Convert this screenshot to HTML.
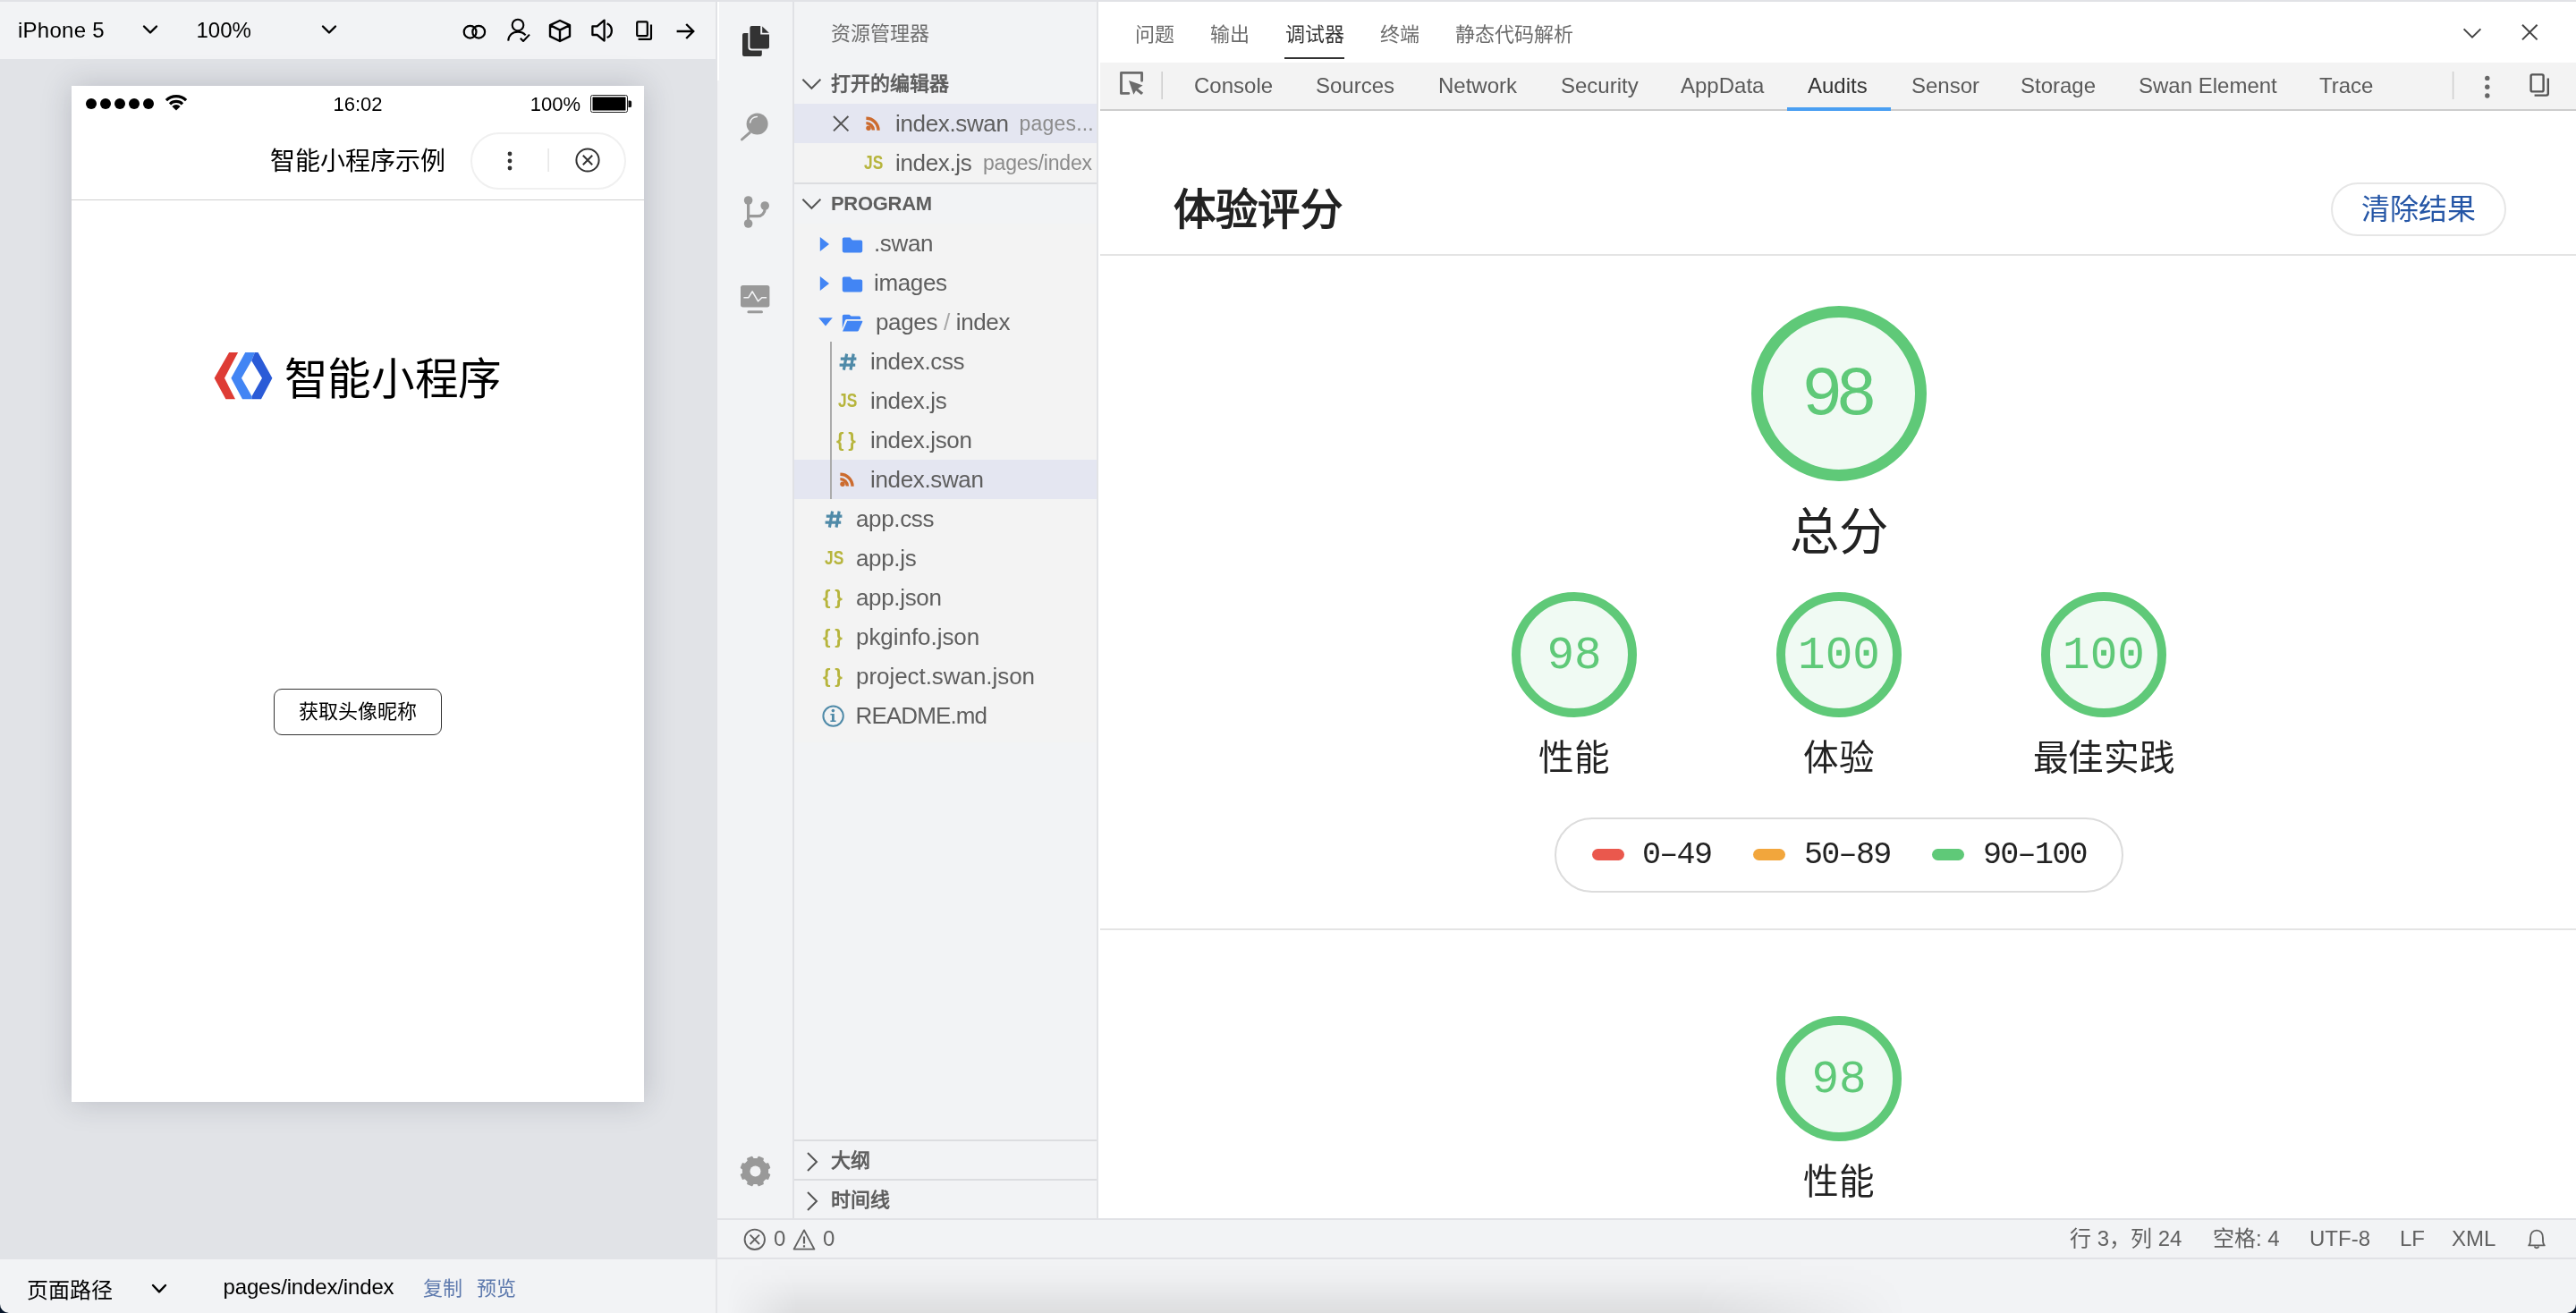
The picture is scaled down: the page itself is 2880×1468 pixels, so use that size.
<!DOCTYPE html>
<html lang="zh-CN">
<head>
<meta charset="utf-8">
<title>智能小程序开发者工具</title>
<style>
*{box-sizing:border-box;margin:0;padding:0}
html,body{width:2880px;height:1468px;overflow:hidden;background:#f2f3f5}
body{position:relative;font-family:"Liberation Sans",sans-serif;color:#000;-webkit-font-smoothing:antialiased;opacity:.999}
.abs{position:absolute}
.t{position:absolute;white-space:nowrap;line-height:1}
svg{position:absolute;overflow:visible}
/* ---------- left simulator panel ---------- */
#topline{left:0;top:0;width:2880px;height:2px;background:#e1e2e6}
#sim{left:0;top:2px;width:800px;height:1466px;background:#e1e3e7;overflow:hidden}
#simbar{left:0;top:0;width:800px;height:64px;background:#f2f3f5}
#simfoot{left:0;top:1406px;width:800px;height:60px;background:#f2f3f5}
#phone{left:80px;top:94px;width:640px;height:1136px;background:#fff;box-shadow:0 0 32px rgba(40,44,60,.21)}
#navline{left:0;top:127px;width:640px;height:1px;background:#cfcfcf}
#capsule{left:446px;top:52px;width:174px;height:64px;border:2px solid #f0f0f0;border-radius:32px}
#btn{left:226px;top:674px;width:188px;height:52px;border:1px solid #333;border-radius:9px}

/* ---------- activity bar + sidebar ---------- */
#act{left:802px;top:2px;width:84px;height:1360px;background:#f2f3f5}
#actb{left:886px;top:2px;width:2px;height:1360px;background:#e0e1e5}
#side{left:888px;top:2px;width:338px;height:1360px;background:#f2f3f5;overflow:hidden;color:#5e5e5e}
#sideb{left:1226px;top:2px;width:2px;height:1360px;background:#e2e3e6}
.row{position:absolute;left:0;width:338px;height:44px}
.sel{background:#e4e6f1}
.ft{position:absolute;white-space:nowrap;font-size:26px;height:44px;line-height:44px;top:0;letter-spacing:-0.35px}
.dim{color:#8b8b8b;font-size:23px;letter-spacing:-0.2px}
.hd{position:absolute;white-space:nowrap;font-size:22px;font-weight:bold;height:44px;line-height:44px;top:0;left:41px;color:#5e5e5e}
.ic{position:absolute;white-space:nowrap;font-weight:bold;top:0;height:44px;line-height:44px;text-align:center}
.js{color:#b7b53d;font-size:22px;margin-left:1px;transform:scaleX(.79);transform-origin:0 50%}
.br{color:#b7b53d;font-size:22px;letter-spacing:4.6px}
.hline{position:absolute;left:0;width:338px;height:2px;background:#dcdde0}

/* ---------- main panel ---------- */
#main{left:1228px;top:2px;width:1652px;height:1360px;background:#fff;overflow:hidden}
.pt{position:absolute;top:17px;height:40px;line-height:40px;font-size:22px;color:#6c6c6c;white-space:nowrap}
#dtbar{left:2px;top:68px;width:1650px;height:52px;background:#f3f3f3}
#dtline{left:2px;top:120px;width:1650px;height:2px;background:#cdcdcd}
.dt{position:absolute;top:68px;height:52px;line-height:52px;font-size:24px;color:#5a5a5a;white-space:nowrap}
.sep{position:absolute;height:2px;background:#e4e4e4;left:2px;width:1650px}
.ring{position:absolute;border-radius:50%;background:#f0faf3;border:10px solid #5fc978;color:#5fc978;font-family:"Liberation Mono",monospace;text-align:center;white-space:nowrap}
.r140{width:140px;height:140px;font-size:51px;line-height:124px}
.lab{position:absolute;width:300px;text-align:center;font-size:39.6px;height:56px;line-height:59px;color:#222;white-space:nowrap}
#legend{left:510px;top:912px;width:636px;height:84px;border:2px solid #dcdcdc;border-radius:42px}
.dash{position:absolute;top:947px;width:36px;height:13px;border-radius:7px}
.lg{position:absolute;top:932px;height:44px;line-height:44px;font-size:35px;font-family:"Liberation Mono",monospace;color:#222;white-space:nowrap;letter-spacing:-1.7px}
#clear{left:1378px;top:202px;width:196px;height:60px;border:2px solid #e6e6e6;border-radius:30px;color:#2556a6;font-size:32px;line-height:56px;text-align:center;white-space:nowrap}
/* ---------- status bar ---------- */
#status{left:802px;top:1362px;width:2078px;height:46px;background:#f2f3f5;border-top:2px solid #e1e2e6;border-bottom:2px solid #e1e2e6;color:#616161}
.st{position:absolute;top:0;height:42px;line-height:42px;font-size:24px;white-space:nowrap}
#under{left:802px;top:1408px;width:2078px;height:60px;background:#f2f3f5}
i{font-style:normal;display:inline-block;width:1em;text-align:center;letter-spacing:0}
</style>
</head>
<body>
<div class="abs" id="topline"></div>

<!-- ================= SIMULATOR ================= -->
<div class="abs" id="sim">
  <div class="abs" id="simbar"></div>
  <div class="t" style="left:20px;top:18px;font-size:24px;letter-spacing:.25px;height:28px;line-height:28px">iPhone 5</div>
  <div class="t" style="left:219.5px;top:18px;font-size:24px;height:28px;line-height:28px">100%</div>
  <svg style="left:0;top:0" width="800" height="64" viewBox="0 2 800 64" fill="none" stroke="#000" stroke-width="2.4" stroke-linecap="round" stroke-linejoin="round">
    <path d="M161 29.5 L168 36.5 L175 29.5"/>
    <path d="M361 29.5 L368 36.5 L375 29.5"/>
    <!-- link circles -->
    <circle cx="525.6" cy="35.7" r="6.9" stroke-width="2.2"/>
    <circle cx="535.2" cy="35.7" r="6.9" stroke-width="2.2"/>
    <!-- user check -->
    <circle cx="579" cy="28" r="6.3" stroke-width="2.1"/>
    <path d="M568.2 45.6 C568.6 39.6 573 35.6 579 35.6 C582.6 35.6 585.6 37 587.6 39.4" stroke-width="2.1" stroke-linecap="butt"/>
    <path d="M581.8 42.8 L585 46 L592 38.6" stroke-width="2.1" stroke-linecap="butt"/>
    <!-- cube -->
    <path d="M626 23 L637 28.2 V40.6 L626 46 L615 40.6 V28.2 Z M615 28.2 L626 33.6 L637 28.2 M626 33.6 V46" stroke-width="2.4"/>
    <!-- speaker -->
    <path d="M662.4 29.4 H667.6 L675.6 22.6 V45.6 L667.6 39 H662.4 Z" stroke-width="2.3"/>
    <path d="M678.6 26.4 A8.4 8.4 0 0 1 678.6 42" stroke-width="2.3" stroke-linecap="butt"/>
    <!-- copy -->
    <rect x="712.2" y="24.4" width="11.6" height="15.8" rx="1.2" stroke-width="2.2"/>
    <path d="M728 27.6 V42.4 a1.4 1.4 0 0 1 -1.4 1.4 H713.6" stroke-width="2.2" stroke-linecap="butt"/>
    <!-- arrow -->
    <path d="M756.6 35 H775 M767.2 27 L775.2 35 L767.2 43" stroke-width="2.4" stroke-linecap="butt" stroke-linejoin="miter"/>
  </svg>

  <!-- phone -->
  <div class="abs" id="phone">
    <svg style="left:0;top:0" width="640" height="130" viewBox="80 96 640 130">
      <g fill="#000">
        <circle cx="102" cy="116" r="6"/><circle cx="118" cy="116" r="6"/><circle cx="134" cy="116" r="6"/><circle cx="150" cy="116" r="6"/><circle cx="166" cy="116" r="6"/>
        <path d="M197 123.6 L192.4 119 A6.5 6.5 0 0 1 201.6 119 Z"/>
      </g>
      <g fill="none" stroke="#000" stroke-width="3.2">
        <path d="M185.9 112.2 A15.8 15.8 0 0 1 208.1 112.2"/>
        <path d="M190 116.3 A10 10 0 0 1 204 116.3"/>
      </g>
      <!-- battery -->
      <rect x="660.5" y="106.5" width="41" height="19" rx="2" fill="none" stroke="#222" stroke-width="1"/>
      <rect x="662.5" y="108.5" width="37" height="15" rx="0.5" fill="#000"/>
      <path d="M702.5 112.4 h2 a1.6 1.6 0 0 1 1.6 1.6 v4.4 a1.6 1.6 0 0 1 -1.6 1.6 h-2 Z" fill="#111"/>
      <!-- capsule icons -->
      <g fill="#333"><circle cx="570" cy="172" r="2.4"/><circle cx="570" cy="180" r="2.4"/><circle cx="570" cy="188" r="2.4"/></g>
      <rect x="612.4" y="166" width="1.4" height="26" fill="#e3e3e3"/>
      <circle cx="657" cy="179" r="12.6" fill="none" stroke="#333" stroke-width="2"/>
      <path d="M651.8 173.8 L662.2 184.2 M662.2 173.8 L651.8 184.2" stroke="#333" stroke-width="2" fill="none"/>
    </svg>
    <div class="t" style="left:220px;top:9px;width:200px;text-align:center;font-size:22px;height:24px;line-height:24px">16:02</div>
    <div class="t" style="left:449px;top:9px;width:120px;text-align:right;font-size:22px;height:24px;line-height:24px">100%</div>
    <div class="t" style="left:120px;top:65px;width:400px;text-align:center;font-size:28px;height:40px;line-height:40px"><i>智</i><i>能</i><i>小</i><i>程</i><i>序</i><i>示</i><i>例</i></div>
    <div class="abs" id="capsule"></div>
    <div class="abs" id="navline"></div>
    <!-- logo -->
    <svg style="left:0;top:290px" width="640" height="70" viewBox="80 386 640 70">
      <path d="M256.1 394 H266.1 L251 422.8 L263 446.2 H252.4 L239.6 422.8 Z" fill="#de3c35"/>
      <path d="M274.2 394 H285 L281.2 403.3 L270 422.8 L281.5 443 V446.2 H271 L258.4 422.8 Z" fill="#4285f4"/>
      <path d="M285 394 H288.5 L304.4 422.8 L292 446.2 H281.5 V443 L293 422.8 L281.2 403.3 Z" fill="#2b5bd7"/>
    </svg>
    <div class="t" style="left:237.8px;top:293px;font-size:48.6px;height:70px;line-height:70px"><i>智</i><i>能</i><i>小</i><i>程</i><i>序</i></div>
    <div class="abs" id="btn"></div>
    <div class="t" style="left:226px;top:674px;width:188px;text-align:center;font-size:22px;height:52px;line-height:52px"><i>获</i><i>取</i><i>头</i><i>像</i><i>昵</i><i>称</i></div>
  </div>

  <!-- footer -->
  <div class="abs" id="simfoot"></div>
  <div class="t" style="left:30px;top:1423px;font-size:24px;height:36px;line-height:36px"><i>页</i><i>面</i><i>路</i><i>径</i></div>
  <svg style="left:0;top:1406px" width="800" height="60" viewBox="0 1408 800 60" fill="none" stroke="#000" stroke-width="2.4" stroke-linecap="round" stroke-linejoin="round">
    <path d="M171 1437 L178 1444.4 L185 1437"/>
  </svg>
  <div class="t" style="left:249.5px;top:1419px;font-size:24px;height:36px;line-height:36px;letter-spacing:-.15px">pages/index/index</div>
  <div class="t" style="left:473px;top:1420.5px;font-size:22px;height:36px;line-height:36px;color:#5d79ad"><i>复</i><i>制</i></div>
  <div class="t" style="left:532.5px;top:1420.5px;font-size:22px;height:36px;line-height:36px;color:#5d79ad"><i>预</i><i>览</i></div>
</div>

<!-- divider between panels -->
<div class="abs" style="left:800px;top:2px;width:2px;height:1466px;background:#e1e2e6"></div>
<div class="abs" style="left:802px;top:2px;width:2px;height:88px;background:#fff"></div>


<!-- ================= ACTIVITY BAR ================= -->
<div class="abs" id="act"></div>
<div class="abs" style="left:802px;top:2px;width:2px;height:88px;background:#fff"></div>
<div class="abs" id="actb"></div>
<svg style="left:802px;top:2px" width="84" height="1360" viewBox="802 2 84 1360">
  <!-- files -->
  <g fill="#333">
    <path d="M840.4 29 H850.2 V38.6 H860 V52.6 a2 2 0 0 1 -2 2 H840.4 a2 2 0 0 1 -2 -2 V31 a2 2 0 0 1 2 -2 Z"/>
    <path d="M852.2 29.4 L859.8 36.8 H852.2 Z"/>
    <path d="M830 39 a2 2 0 0 1 2 -2 H836.4 V52.8 a3.8 3.8 0 0 0 3.8 3.8 H851.8 V61 a2 2 0 0 1 -2 2 H832 a2 2 0 0 1 -2 -2 Z"/>
  </g>
  <!-- search -->
  <g fill="#999" stroke="none">
    <circle cx="846.6" cy="138.6" r="12"/>
    <path d="M838 146.6 L840 148.8 L830.4 157 a1.4 1.4 0 0 1 -2 -2 Z"/>
  </g>
  <path d="M838.6 137 A8.4 8.4 0 0 1 846.4 130.6" fill="none" stroke="#f2f3f5" stroke-width="1.5" stroke-linecap="round"/>
  <!-- source control -->
  <g fill="#999"><circle cx="836.6" cy="224" r="4.8"/><circle cx="836.6" cy="250" r="4.8"/><circle cx="855.2" cy="230" r="4.8"/></g>
  <path d="M836.6 224 V250 M836.6 241.6 H847.2 a8 8 0 0 0 8 -8 V230" fill="none" stroke="#999" stroke-width="3.2"/>
  <!-- monitor -->
  <rect x="828" y="319" width="32.4" height="24.4" rx="2.6" fill="#999"/>
  <rect x="835.4" y="347.2" width="17.6" height="3" rx="1.5" fill="#999"/>
  <path d="M831.4 332.7 H836.9 L841.1 325.9 L847.6 336.8 L851.8 332.7 H857.1" fill="none" stroke="#f2f3f5" stroke-width="1.6" stroke-linejoin="round"/>
  <!-- gear -->
  <g transform="translate(844.5 1309.5)"><path d="M13.78 2.46 L15.95 3.83 L13.98 8.57 L11.48 8.01 L8.01 11.48 L8.57 13.98 L3.83 15.95 L2.46 13.78 L-2.46 13.78 L-3.83 15.95 L-8.57 13.98 L-8.01 11.48 L-11.48 8.01 L-13.98 8.57 L-15.95 3.83 L-13.78 2.46 L-13.78 -2.46 L-15.95 -3.83 L-13.98 -8.57 L-11.48 -8.01 L-8.01 -11.48 L-8.57 -13.98 L-3.83 -15.95 L-2.46 -13.78 L2.46 -13.78 L3.83 -15.95 L8.57 -13.98 L8.01 -11.48 L11.48 -8.01 L13.98 -8.57 L15.95 -3.83 L13.78 -2.46 Z" fill="#999" stroke="#999" stroke-width="1.6" stroke-linejoin="round"/><circle r="6" fill="#f2f3f5"/></g>
</svg>

<!-- ================= SIDEBAR ================= -->
<div class="abs" id="side">
  <div class="t" style="left:41px;top:20px;font-size:22px;height:32px;line-height:32px;color:#6f6f6f"><i>资</i><i>源</i><i>管</i><i>理</i><i>器</i></div>
  <div class="abs" style="left:0;top:114px;width:338px;height:88px;background:#f3f3f3"></div>
  <div class="abs" style="left:0;top:248px;width:338px;height:580px;background:#f3f3f3"></div>
  <div class="row" style="top:70px"><span class="hd"><i>打</i><i>开</i><i>的</i><i>编</i><i>辑</i><i>器</i></span></div>
  <div class="row sel" style="top:114px"><span class="ft" style="left:113px">index.swan</span><span class="ft dim" style="left:251.5px;letter-spacing:.2px">pages...</span></div>
  <div class="row" style="top:158px"><span class="ic js" style="left:77px">JS</span><span class="ft" style="left:113px">index.js</span><span class="ft dim" style="left:211px">pages/index</span></div>
  <div class="hline" style="top:202px"></div>
  <div class="row" style="top:204px"><span class="hd" style="letter-spacing:-.3px">PROGRAM</span></div>
  <div class="row" style="top:248px"><span class="ft" style="left:89px">.swan</span></div>
  <div class="row" style="top:292px"><span class="ft" style="left:89px">images</span></div>
  <div class="row" style="top:336px"><span class="ft" style="left:91px">pages <span style="color:#a8a8a8">/</span> index</span></div>
  <div class="row" style="top:380px"><span class="ft" style="left:85px">index.css</span></div>
  <div class="row" style="top:424px"><span class="ic js" style="left:48px">JS</span><span class="ft" style="left:85px">index.js</span></div>
  <div class="row" style="top:468px"><span class="ic br" style="left:47px">{}</span><span class="ft" style="left:85px">index.json</span></div>
  <div class="row sel" style="top:512px"><span class="ft" style="left:85px">index.swan</span></div>
  <div class="row" style="top:556px"><span class="ft" style="left:69px">app.css</span></div>
  <div class="row" style="top:600px"><span class="ic js" style="left:33px">JS</span><span class="ft" style="left:69px">app.js</span></div>
  <div class="row" style="top:644px"><span class="ic br" style="left:32px">{}</span><span class="ft" style="left:69px">app.json</span></div>
  <div class="row" style="top:688px"><span class="ic br" style="left:32px">{}</span><span class="ft" style="left:69px;letter-spacing:-.05px">pkginfo.json</span></div>
  <div class="row" style="top:732px"><span class="ic br" style="left:32px">{}</span><span class="ft" style="left:69px;letter-spacing:-.05px">project.swan.json</span></div>
  <div class="row" style="top:776px"><span class="ft" style="left:68.5px;letter-spacing:-.88px">README.md</span></div>
  <div class="abs" style="left:40px;top:380px;width:2px;height:176px;background:#ababab"></div>
  <div class="hline" style="top:1272px"></div>
  <div class="row" style="top:1274px"><span class="hd"><i>大</i><i>纲</i></span></div>
  <div class="hline" style="top:1316px"></div>
  <div class="row" style="top:1318px"><span class="hd"><i>时</i><i>间</i><i>线</i></span></div>
  <svg style="left:0;top:0" width="338" height="1360" viewBox="888 2 338 1360" fill="none">
    <g stroke="#555" stroke-width="2" stroke-linecap="butt">
      <path d="M897.4 88.8 L907.4 98.8 L917.4 88.8"/>
      <path d="M897.4 222.8 L907.4 232.8 L917.4 222.8"/>
      <path d="M903 1289 L913 1299 L903 1309"/>
      <path d="M903 1333 L913 1343 L903 1353"/>
      <path d="M932 130 L948.4 146.4 M948.4 130 L932 146.4"/>
    </g>
    <!-- rss icons -->
    <g fill="none" stroke="#cc6b2e" stroke-width="3.4">
      <circle cx="971" cy="143.2" r="2.7" fill="#cc6b2e" stroke="none"/>
      <path d="M968.4 137.6 A8 8 0 0 1 976.4 145.6"/>
      <path d="M968.4 132.2 A13.6 13.6 0 0 1 982 145.8"/>
    </g>
    <g fill="none" stroke="#cc6b2e" stroke-width="3.4" transform="translate(-29 398)">
      <circle cx="971" cy="143.2" r="2.7" fill="#cc6b2e" stroke="none"/>
      <path d="M968.4 137.6 A8 8 0 0 1 976.4 145.6"/>
      <path d="M968.4 132.2 A13.6 13.6 0 0 1 982 145.8"/>
    </g>
    <!-- css hash icons -->
    <g stroke="#4f8aa8" stroke-width="3.2">
      <path d="M946.6 395.6 L943.4 413.6 M954.2 395.6 L951 413.6 M939.8 401.2 H957.4 M938.6 408.2 H956.2"/>
    </g>
    <g stroke="#4f8aa8" stroke-width="3.2" transform="translate(-16 176)"><path d="M946.6 395.6 L943.4 413.6 M954.2 395.6 L951 413.6 M939.8 401.2 H957.4 M938.6 408.2 H956.2"/></g>
    <!-- folder arrows -->
    <g fill="#4285f4">
      <path d="M916.8 265 L927 273 L916.8 281 Z"/>
      <path d="M916.8 309 L927 317 L916.8 325 Z"/>
      <path d="M915.2 355.2 H930.8 L923 364.6 Z"/>
      <path d="M941.8 267.2 a1.8 1.8 0 0 1 1.8 -1.8 H950.4 L953 268.4 H962.4 a1.8 1.8 0 0 1 1.8 1.8 V280.6 a1.8 1.8 0 0 1 -1.8 1.8 H943.6 a1.8 1.8 0 0 1 -1.8 -1.8 Z"/>
      <path d="M941.8 267.2 a1.8 1.8 0 0 1 1.8 -1.8 H950.4 L953 268.4 H962.4 a1.8 1.8 0 0 1 1.8 1.8 V280.6 a1.8 1.8 0 0 1 -1.8 1.8 H943.6 a1.8 1.8 0 0 1 -1.8 -1.8 Z" transform="translate(0 44)"/>
      <!-- open folder -->
      <path d="M941.8 353.4 a1.6 1.6 0 0 1 1.6 -1.6 H949.6 L951.6 353.6 H960.6 a1.6 1.6 0 0 1 1.6 1.6 V357 H946.8 a2 2 0 0 0 -1.9 1.3 L941.8 367.2 Z"/>
      <path d="M947.2 358.8 H963.4 a.9 .9 0 0 1 .8 1.3 L959.8 369.8 a1.4 1.4 0 0 1 -1.3 .8 H942 Z"/>
    </g>
    <!-- info icon -->
    <circle cx="931.6" cy="800.6" r="11.2" stroke="#4f8aa8" stroke-width="2"/>
    <g fill="#4f8aa8"><circle cx="931.4" cy="794.6" r="1.8"/><path d="M928.4 798 H932.8 V805.4 H934.6 V807 H928.4 V805.4 H930 V799.6 H928.4 Z"/></g>
  </svg>
</div>
<div class="abs" id="sideb"></div>


<!-- ================= MAIN PANEL ================= -->
<div class="abs" id="main">
  <span class="pt" style="left:41px"><i>问</i><i>题</i></span>
  <span class="pt" style="left:125px"><i>输</i><i>出</i></span>
  <span class="pt" style="left:209px;color:#333"><i>调</i><i>试</i><i>器</i></span>
  <span class="pt" style="left:315px"><i>终</i><i>端</i></span>
  <span class="pt" style="left:399px"><i>静</i><i>态</i><i>代</i><i>码</i><i>解</i><i>析</i></span>
  <div class="abs" style="left:208px;top:62px;width:67px;height:2px;background:#333"></div>
  <div class="abs" id="dtbar"></div>
  <div class="abs" id="dtline"></div>
  <span class="dt" style="left:107px">Console</span>
  <span class="dt" style="left:243px">Sources</span>
  <span class="dt" style="left:380px">Network</span>
  <span class="dt" style="left:517px">Security</span>
  <span class="dt" style="left:651px">AppData</span>
  <span class="dt" style="left:793px;color:#333">Audits</span>
  <span class="dt" style="left:909px">Sensor</span>
  <span class="dt" style="left:1031px">Storage</span>
  <span class="dt" style="left:1163px">Swan Element</span>
  <span class="dt" style="left:1365px">Trace</span>
  <div class="abs" style="left:770px;top:118px;width:116px;height:4px;background:#4a9ff2"></div>
  <svg style="left:0;top:0" width="1652" height="130" viewBox="1228 2 1652 130" fill="none">
    <!-- inspect -->
    <path d="M1276.6 90.2 V81.4 H1253.5 V104.4 H1261.8" stroke="#6b6b6b" stroke-width="2.9" stroke-linecap="round" stroke-linejoin="round"/>
    <path d="M1262 90 L1277.6 95.6 L1272.2 99 L1278.2 103.8 L1276 106 L1270 101.2 L1267.4 105.8 Z" fill="#6b6b6b"/>
    <rect x="1298.4" y="80" width="1.6" height="31" fill="#cfcfcf"/>
    <rect x="2741.8" y="80" width="1.6" height="31" fill="#cfcfcf"/>
    <g fill="#666"><circle cx="2780.8" cy="87.4" r="2.7"/><circle cx="2780.8" cy="97.2" r="2.7"/><circle cx="2780.8" cy="107" r="2.7"/></g>
    <rect x="2829.6" y="83.4" width="14" height="19" rx="1.6" stroke="#555" stroke-width="2.4"/>
    <path d="M2848.8 87.6 V104.6 a2 2 0 0 1 -2 2 H2833.6" stroke="#555" stroke-width="2.4"/>
    <path d="M2754.6 32.4 L2764 41.6 L2773.4 32.4" stroke="#444" stroke-width="2"/>
    <path d="M2820 27.8 L2836.6 44.4 M2836.6 27.8 L2820 44.4" stroke="#444" stroke-width="2"/>
  </svg>

  <div class="t" style="left:83.5px;top:198px;font-size:47.4px;font-weight:bold;height:70px;line-height:70px;color:#222"><i>体</i><i>验</i><i>评</i><i>分</i></div>
  <div class="abs" id="clear"><i>清</i><i>除</i><i>结</i><i>果</i></div>
  <div class="sep" style="top:282px"></div>

  <div class="ring" style="left:730px;top:340px;width:196px;height:196px;border-width:13px;font-size:77px;line-height:176px;letter-spacing:-8px;padding-right:7px">98</div>
  <div class="lab" style="left:678px;top:554.5px;font-size:55.4px;height:76px;line-height:76px"><i>总</i><i>分</i></div>

  <div class="ring r140" style="left:462px;top:660px">98</div>
  <div class="ring r140" style="left:758px;top:660px">100</div>
  <div class="ring r140" style="left:1054px;top:660px">100</div>
  <div class="lab" style="left:382px;top:816px"><i>性</i><i>能</i></div>
  <div class="lab" style="left:678px;top:816px"><i>体</i><i>验</i></div>
  <div class="lab" style="left:974px;top:816px"><i>最</i><i>佳</i><i>实</i><i>践</i></div>

  <div class="abs" id="legend"></div>
  <div class="dash" style="left:552px;background:#ea584d"></div>
  <span class="lg" style="left:608px">0&#8211;49</span>
  <div class="dash" style="left:732px;background:#f2a63c"></div>
  <span class="lg" style="left:789px">50&#8211;89</span>
  <div class="dash" style="left:932px;background:#5fc978"></div>
  <span class="lg" style="left:989px">90&#8211;100</span>
  <div class="sep" style="top:1036px"></div>

  <div class="ring r140" style="left:758px;top:1134px">98</div>
  <div class="lab" style="left:678px;top:1290px"><i>性</i><i>能</i></div>
</div>

<!-- ================= STATUS BAR ================= -->
<div class="abs" id="status">
  <svg style="left:0;top:0" width="2078" height="42" viewBox="802 1364 2078 42" fill="none" stroke="#616161" stroke-width="1.9">
    <circle cx="843.8" cy="1385.8" r="11.2"/>
    <path d="M838.6 1380.6 L849 1391 M849 1380.6 L838.6 1391"/>
    <path d="M899 1375.4 L910.4 1396.6 H887.6 Z" stroke-linejoin="round"/>
    <path d="M899 1382.6 V1390.4 M899 1392.2 V1394.4" stroke-width="2.2"/>
    <!-- bell -->
    <path d="M2827.2 1392.4 C2829.4 1390.6 2829 1387.6 2829 1384.2 C2829 1379 2831.8 1375.6 2836 1375.6 C2840.2 1375.6 2843 1379 2843 1384.2 C2843 1387.6 2842.6 1390.6 2844.8 1392.4 Z" stroke-linejoin="round"/>
    <path d="M2833.6 1393.6 a2.5 2.5 0 0 0 4.8 0"/>
  </svg>
  <span class="st" style="left:63px">0</span>
  <span class="st" style="left:118px">0</span>
  <span class="st" style="left:1512px"><i>行</i> 3<i>，</i><i>列</i> 24</span>
  <span class="st" style="left:1672px"><i>空</i><i>格</i>: 4</span>
  <span class="st" style="left:1780px">UTF-8</span>
  <span class="st" style="left:1881px">LF</span>
  <span class="st" style="left:1939px">XML</span>
</div>
<div class="abs" id="under"></div>
<div class="abs" style="left:812px;top:1408px;width:1320px;height:60px;background:linear-gradient(to bottom,rgba(0,0,0,0) 0%,rgba(0,0,0,.02) 40%,rgba(0,0,0,.085) 100%);-webkit-mask-image:linear-gradient(to right,transparent 0,#000 6%,#000 82%,transparent 100%);mask-image:linear-gradient(to right,transparent 0,#000 6%,#000 82%,transparent 100%)"></div>
<div class="abs" style="left:800px;top:1408px;width:2px;height:60px;background:#e4e5e8"></div>
<!-- window corners -->
<svg style="left:0;top:1458px" width="10" height="10" viewBox="0 0 10 10"><path d="M0 0 V10 H10 A10 10 0 0 1 0 0 Z" fill="#08162a"/></svg>
<svg style="left:2870px;top:1458px" width="10" height="10" viewBox="0 0 10 10"><path d="M10 0 V10 H0 A10 10 0 0 0 10 0 Z" fill="#08162a"/></svg>

</body>
</html>
